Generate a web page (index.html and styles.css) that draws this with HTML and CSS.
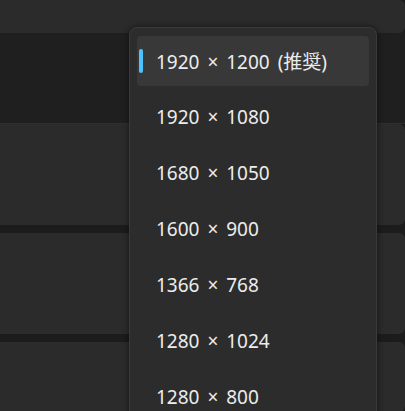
FILE: index.html
```html
<!DOCTYPE html>
<html lang="ja">
<head>
  <meta charset="UTF-8">
  <meta name="viewport" content="width=device-width, initial-scale=1.0">
  <title>ディスプレイの解像度</title>
  <link rel="stylesheet" href="styles.css">
</head>
<body>
  <div class="page">
    <div class="card card-top"></div>
    <div class="band"></div>
    <div class="card card-row"></div>
    <div class="card card-row"></div>
    <div class="card card-last"></div>
  </div>

  <div class="menu">
    <div class="item selected">1920 × 1200 (推奨)</div>
    <div class="item">1920 × 1080</div>
    <div class="item">1680 × 1050</div>
    <div class="item">1600 × 900</div>
    <div class="item">1366 × 768</div>
    <div class="item">1280 × 1024</div>
    <div class="item">1280 × 800</div>
  </div>
</body>
</html>
```

FILE: styles.css
```css
html, body {
  margin: 0;
  height: 100%;
  overflow: hidden;
}

body {
  background: #1c1c1c;
  font-family: "Noto Sans", "Noto Sans CJK JP", sans-serif;
  position: relative;
}

.page {
  display: flex;
  flex-direction: column;
  gap: 8px;
}

.card {
  background: #2b2b2b;
  border-radius: 0 6px 6px 0;
}

.card-top {
  height: 33px;
  margin-bottom: -8px;
}

.band {
  height: 90px;
  background: #1f1f1f;
  border-bottom: 1px solid #2f2f2f;
  margin-bottom: -8px;
}

.card-row {
  height: 101px;
}

.card-last {
  height: 70px;
}

.menu {
  position: absolute;
  left: 129px;
  top: 27px;
  width: 232px;
  height: 380px;
  padding: 8px 7px;
  overflow: hidden;
  background: #2c2c2c;
  border: 1px solid #3a3a3a;
  border-radius: 8px;
  box-shadow: 0 0 6px rgba(0, 0, 0, 0.55);
}

.item {
  position: relative;
  height: 50px;
  margin-bottom: 6px;
  padding-left: 19px;
  display: flex;
  align-items: center;
  font-size: 19px;
  word-spacing: 3px;
  color: #ececec;
  border-radius: 4px;
}

.item.selected {
  background: #383838;
}

.item.selected::before {
  content: "";
  position: absolute;
  left: 2px;
  top: 13px;
  width: 4px;
  height: 24px;
  border-radius: 2px;
  background: #4cc2ff;
}
```
